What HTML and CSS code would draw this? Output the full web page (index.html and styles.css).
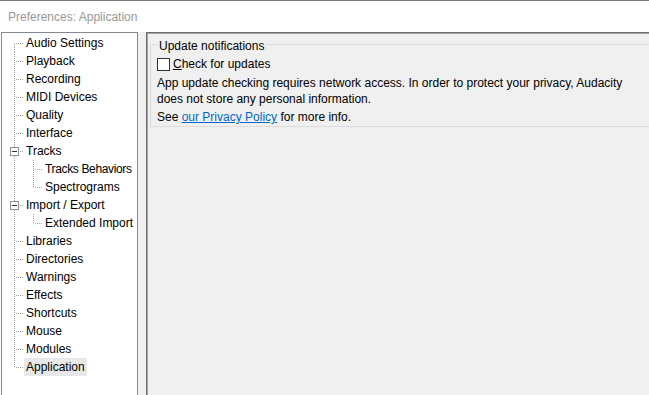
FILE: index.html
```html
<!DOCTYPE html>
<html>
<head>
<meta charset="utf-8">
<link rel="stylesheet" href="styles.css">
</head>
<body>
<div class="titlebar">Preferences: Application</div>
<div class="main">
  <div class="tree">
    <div class="row first"><span class="lbl">Audio Settings</span></div>
    <div class="row"><span class="lbl">Playback</span></div>
    <div class="row"><span class="lbl">Recording</span></div>
    <div class="row"><span class="lbl">MIDI Devices</span></div>
    <div class="row"><span class="lbl">Quality</span></div>
    <div class="row"><span class="lbl">Interface</span></div>
    <div class="row"><span class="exp"></span><span class="lbl">Tracks</span></div>
    <div class="row sub"><span class="vline"></span><span class="lbl narrow">Tracks Behaviors</span></div>
    <div class="row sub lastsub"><span class="vline"></span><span class="lbl">Spectrograms</span></div>
    <div class="row"><span class="exp"></span><span class="lbl">Import / Export</span></div>
    <div class="row sub lastsub"><span class="vline"></span><span class="lbl">Extended Import</span></div>
    <div class="row"><span class="lbl">Libraries</span></div>
    <div class="row"><span class="lbl">Directories</span></div>
    <div class="row"><span class="lbl">Warnings</span></div>
    <div class="row"><span class="lbl">Effects</span></div>
    <div class="row"><span class="lbl">Shortcuts</span></div>
    <div class="row"><span class="lbl">Mouse</span></div>
    <div class="row"><span class="lbl">Modules</span></div>
    <div class="row last"><span class="lbl sel">Application</span></div>
  </div>
  <div class="panel">
    <div class="group">
      <div class="legend">Update notifications</div>
      <label class="check"><span class="box"></span><span><u>C</u>heck for updates</span></label>
      <p class="para">App update checking requires network access. In order to protect your privacy, Audacity does not store any personal information.</p>
      <p class="para see">See <a href="#" class="link">our Privacy Policy</a> for more info.</p>
    </div>
  </div>
</div>
</body>
</html>
```
FILE: styles.css
```css
html, body {
  margin: 0;
  padding: 0;
}
body {
  width: 649px;
  height: 395px;
  overflow: hidden;
  background: #ffffff;
  font-family: "Liberation Sans", Arial, sans-serif;
  font-size: 12px;
  color: #000;
}
.titlebar {
  box-sizing: border-box;
  height: 32px;
  border-top: 1px solid #7a7a7a;
  padding: 8px 0 0 8px;
  line-height: 16px;
  color: #999999;
  background: #ffffff;
}
.main {
  display: flex;
  height: 363px;
  background: #f0f0f0;
  border-left: 1px solid #ffffff;
}
.tree {
  box-sizing: border-box;
  width: 137px;
  height: 380px;
  border: 1px solid #828790;
  background: #fff;
  padding-top: 1px;
  flex: none;
  overflow: hidden;
}
.row {
  position: relative;
  height: 18px;
  line-height: 18px;
  padding-left: 22px;
  white-space: nowrap;
}
.row::before {
  content: "";
  position: absolute;
  left: 12px;
  top: 0;
  bottom: 0;
  width: 1px;
  background: repeating-linear-gradient(to bottom, #a0a0a0 0 1px, transparent 1px 2px);
}
.row.first::before { top: 9px; }
.row.last::before { bottom: 8px; }
.row::after {
  content: "";
  position: absolute;
  left: 13px;
  top: 9px;
  width: 9px;
  height: 1px;
  background: repeating-linear-gradient(to right, transparent 0 1px, #a0a0a0 1px 2px);
}
.row.sub { padding-left: 41px; }
.row.sub::after { left: 32px; }
.vline {
  position: absolute;
  left: 31px;
  top: 0;
  bottom: 0;
  width: 1px;
  background: repeating-linear-gradient(to bottom, #a0a0a0 0 1px, transparent 1px 2px);
}
.lastsub .vline { bottom: 8px; }
.exp {
  position: absolute;
  z-index: 1;
  left: 8px;
  top: 5px;
  box-sizing: border-box;
  width: 9px;
  height: 9px;
  border: 1px solid #919191;
  background: #fff;
}
.exp::after {
  content: "";
  position: absolute;
  left: 1px;
  top: 3px;
  width: 5px;
  height: 1px;
  background: #333;
}
.lbl {
  display: inline-block;
  padding: 0 2px;
}
.lbl.narrow { letter-spacing: -0.35px; }
.lbl.sel { background: #e8e8e8; }
.panel {
  flex: 1;
  margin-left: 8px;
  border-left: 1px solid #6e6e6e;
  border-top: 1px solid #6e6e6e;
  box-shadow: inset 1px 1px 0 #a0a0a0;
  background: #f0f0f0;
  overflow: hidden;
}
.group {
  margin: 11px -20px 0 3px;
  border: 1px solid #dcdcdc;
  padding: 0 0 1px 6px;
}
.legend {
  width: max-content;
  margin-top: -7px;
  padding: 0 2px;
  line-height: 16px;
  background: #f0f0f0;
}
.check {
  display: flex;
  align-items: center;
  gap: 3px;
  height: 16px;
  margin-top: 2px;
  line-height: 16px;
}
.box {
  box-sizing: border-box;
  width: 13px;
  height: 13px;
  border: 1px solid #333;
  background: #fff;
}
.para {
  width: 470px;
  margin: 3px 0 0 0;
  line-height: 16px;
}
.see { margin-top: 2px; }
.link { color: #0066cc; text-decoration: underline; }
```
